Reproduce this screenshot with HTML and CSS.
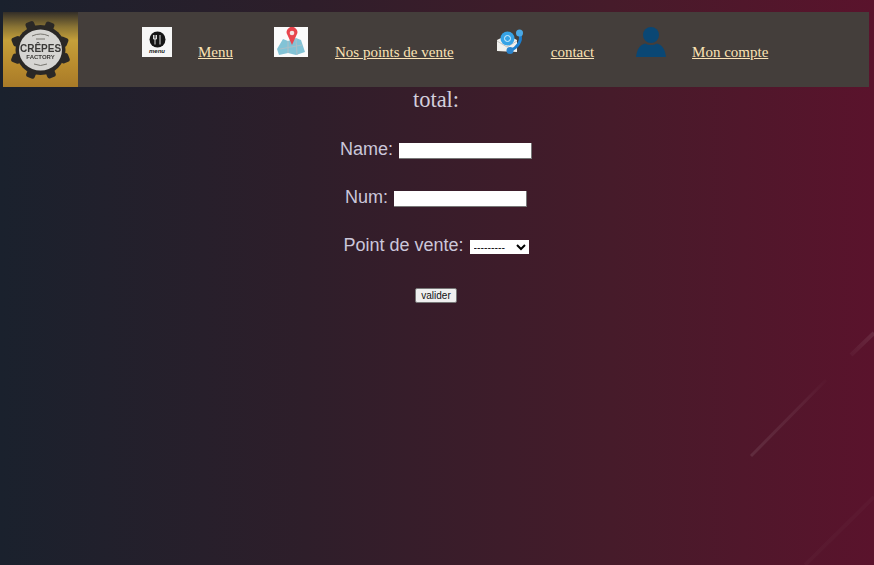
FILE: index.html
```html
<!DOCTYPE html>
<html lang="fr">
  <head>
    <meta charset="utf-8">
    <title>Crêpes Factory</title>
    <link rel="stylesheet" href="styles.css">
  </head>
  <body>
    <!-- faint streaks of the background picture -->
    <svg class="streaks" width="874" height="565" viewBox="0 0 874 565">
      <defs>
        <linearGradient id="s1" gradientUnits="userSpaceOnUse" x1="751" y1="456" x2="826" y2="380">
          <stop offset="0" stop-color="#fff" stop-opacity=".09"/>
          <stop offset=".7" stop-color="#fff" stop-opacity=".05"/>
          <stop offset="1" stop-color="#fff" stop-opacity=".01"/>
        </linearGradient>
        <linearGradient id="s2" gradientUnits="userSpaceOnUse" x1="851" y1="355" x2="874" y2="333">
          <stop offset="0" stop-color="#fff" stop-opacity=".03"/>
          <stop offset="1" stop-color="#fff" stop-opacity=".09"/>
        </linearGradient>
      </defs>
      <path d="M751 456 L826 380" stroke="url(#s1)" stroke-width="3"/>
      <path d="M851 355 L874 333" stroke="url(#s2)" stroke-width="4"/>
      <path d="M805 565 L874 497" stroke="#fff" stroke-opacity=".025" stroke-width="4"/>
    </svg>

    <div id="header">
      <svg class="logo" width="75" height="75" viewBox="0 0 75 75">
        <defs>
          <linearGradient id="gold" x1="0" y1="0" x2="0" y2="1">
            <stop offset="0" stop-color="#332e28"/>
            <stop offset=".2" stop-color="#8a7434"/>
            <stop offset=".38" stop-color="#c5a03a"/>
            <stop offset=".7" stop-color="#b98c2e"/>
            <stop offset="1" stop-color="#a87a28"/>
          </linearGradient>
        </defs>
        <rect width="75" height="75" fill="url(#gold)"/>
        <g fill="#2a2826">
          <circle cx="37.5" cy="38" r="25"/>
          <rect x="23" y="10" width="9" height="9" rx="2.500" transform="rotate(-22 27 14)"/>
          <rect x="42" y="10" width="9" height="9" rx="2.500" transform="rotate(22 46 14)"/>
          <rect x="56" y="25" width="9" height="9" rx="2.500" transform="rotate(22 60 29)"/>
          <rect x="57" y="42" width="9" height="9" rx="2.500" transform="rotate(-22 61 46)"/>
          <rect x="43" y="57" width="9" height="9" rx="2.500" transform="rotate(-22 47 61)"/>
          <rect x="24" y="57" width="9" height="9" rx="2.500" transform="rotate(22 28 61)"/>
          <rect x="9" y="42" width="9" height="9" rx="2.500" transform="rotate(22 13 46)"/>
          <rect x="9" y="25" width="9" height="9" rx="2.500" transform="rotate(-22 13 29)"/>
        </g>
        <ellipse cx="37.5" cy="38" rx="21.500" ry="20.500" fill="#d6d5d2"/>
        <text x="37.5" y="40" class="logo-big" text-anchor="middle">CRÊPES</text>
        <text x="37.5" y="46.500" class="logo-small" text-anchor="middle">FACTORY</text>
        <path d="M29 24 Q37.500 20 46 24 M33 27h9 M31 52 Q37.500 55 44 52" stroke="#77756f" stroke-width="1" fill="none"/>
      </svg>

      <div class="nav">
        <div class="item">
          <svg class="icon" width="30" height="30" viewBox="0 0 30 30">
            <rect width="30" height="30" fill="#f6f6f6"/>
            <circle cx="15.500" cy="12.500" r="8" fill="#151515"/>
            <path d="M11.500 8v4M13 8v4M14.500 8v4M11.500 12h3M13 12v5.500M18 8v9.500" stroke="#f0f0f0" stroke-width=".9" fill="none"/>
            <text x="15" y="26" class="menu-word" text-anchor="middle">menu</text>
          </svg>
          <a href="#">Menu</a>
        </div>
        <div class="item gapL">
          <svg class="icon" width="34" height="30" viewBox="0 0 34 30">
            <rect width="34" height="30" fill="#fbfbfb"/>
            <path d="M9 12 L14 14 L22 11 L27 13 L31 25 L22 28 L14 26 L5 28 L3 22 Z" fill="#82c3d6"/>
            <path d="M6 22 L28 18 M14 14 L14 26 M22 12 L23 28" stroke="#a9bfc8" stroke-width="1.200" fill="none"/>
            <path d="M18 18 L13.500 8 A5.300 5.300 0 1 1 22.500 8 Z" fill="#e8454d"/>
            <circle cx="18" cy="6" r="2.300" fill="#f4e4e4"/>
          </svg>
          <a href="#">Nos points de vente</a>
        </div>
        <div class="item">
          <svg class="icon" width="30" height="30" viewBox="0 0 30 30">
            <path d="M2 13 L12 8 L22 13 L22 25 L2 24 Z" fill="#f1f1ee"/>
            <path d="M2 14 L12 20 L22 14" stroke="#c6c6c4" fill="none"/>
            <circle cx="12.500" cy="11.500" r="7" fill="#36a3e6"/>
            <circle cx="12.500" cy="11.500" r="3" fill="none" stroke="#d5f0ff"/>
            <path d="M25 8 C27 14 22 21 16 23" stroke="#1a7fd0" stroke-width="3" fill="none"/>
            <circle cx="24.500" cy="6" r="3.500" fill="#4aa8e4"/>
            <circle cx="15" cy="23.500" r="3.500" fill="#2b84cc"/>
          </svg>
          <a href="#">contact</a>
        </div>
        <div class="item gapS">
          <svg class="icon" width="30" height="30" viewBox="0 0 30 30">
            <circle cx="15" cy="8" r="8" fill="#0a4774"/>
            <path d="M0 30 C1 22 4 18 9 16.500 Q15 19.500 21 16.500 C26 18 29 22 30 30 Z" fill="#0a4774"/>
          </svg>
          <a href="#">Mon compte</a>
        </div>
      </div>
    </div>

    <form class="order">
      <div class="total">total:</div>
      <div class="row"><label>Name:</label> <input type="text" class="field"></div>
      <div class="row"><label>Num:</label> <input type="text" class="field"></div>
      <div class="row"><label>Point de vente:</label>
        <select class="choice"><option>---------</option></select>
      </div>
      <div class="send"><button type="button" class="bSend">valider</button></div>
    </form>
  </body>
</html>
```

FILE: styles.css
```css
html, body   {  height: 100%;  }
body         {  margin: 0;  overflow: hidden;  position: relative;  background: linear-gradient(90deg, #1a212d 0%, #2e1e2a 35%, #461b2a 70%, #5a132c 100%);  font-family: "Liberation Serif", serif;  color: #cbc7da;  }
.streaks     {  position: absolute;  left: 0;  top: 0;  }

#header      {  position: relative;  display: flex;  height: 75px;  margin: 12px 5px 0 3px;  background-color: #443e3b;  }
.logo        {  display: block;  flex: none;  filter: blur(.4px);  }
.logo-big    {  font: bold 10px "Liberation Sans", sans-serif;  fill: #3a3937;  }
.logo-small  {  font: bold 6px "Liberation Sans", sans-serif;  fill: #3a3937;  }
.menu-word   {  font: italic bold 6px "Liberation Sans", sans-serif;  fill: #222;  }
.nav         {  display: flex;  gap: 41px;  padding: 15px 0 0 64px;  }
.item        {  display: flex;  align-items: flex-end;  gap: 26px;  height: 30px;  }
.gapL        {  gap: 27px;  }
.gapS        {  gap: 26px;  margin-left: 1px;  }
.icon        {  display: block;  flex: none;  }
.item a      {  font-size: 15px;  line-height: 17px;  margin-bottom: -4px;  color: #fbe3b4;  }

.order       {  position: relative;  padding-right: 2px;  text-align: center;  }
.total       {  font-size: 22.5px;  line-height: 26px;  color: #d3cfdc;  }
.row         {  font: 18px/21px "Liberation Sans", sans-serif;  margin-top: 27px;  }
.row:nth-child(2) {  margin-top: 26px;  }
.row label   {  margin-right: 1px;  }
.field       {  box-sizing: border-box;  width: 133px;  height: 16px;  padding: 0;  border: 1px solid #777;  border-width: 0 1px 1px 0;  background: #fff;  }
.choice      {  box-sizing: border-box;  width: 59px;  height: 14px;  padding: 0;  border: 0;  border-radius: 0;  background: #fff;  font: 10.5px "Liberation Sans", sans-serif;  }
.send        {  margin-top: 29px;  }
.bSend       {  box-sizing: border-box;  width: 42px;  height: 15.5px;  padding: 0;  border: 1px solid #777;  border-radius: 2px;  background: #efefef;  font: 10px "Liberation Sans", sans-serif;  color: #111;  }
```
